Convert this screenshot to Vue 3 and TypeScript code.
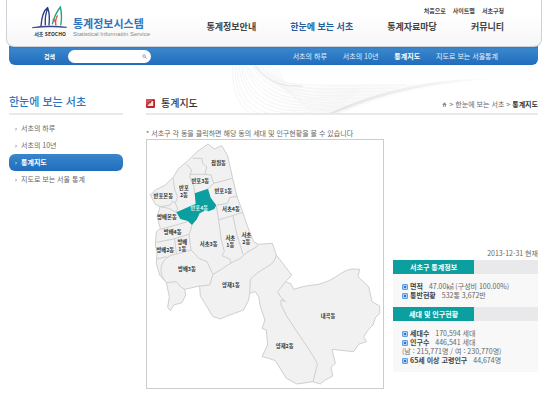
<script setup lang="ts">
import { ref } from 'vue'

interface Label { lines: string[]; x: number; y: number }

const keyword = ref('')
const utilities = ['처음으로', '사이트맵', '서초구청']
const sections = ['통계정보안내', '한눈에 보는 서초', '통계자료마당', '커뮤니티']
const submenu = ['서초의 하루', '서초의 10년', '통계지도', '지도로 보는 서울통계']
const sidebar = ['서초의 하루', '서초의 10년', '통계지도', '지도로 보는 서울 통계']
const selected = '반포4동'

const labels: Label[] = [
  { lines: ['잠원동'], x: 235, y: 83 },
  { lines: ['반포3동'], x: 180, y: 139 },
  { lines: ['반포', '2동'], x: 131, y: 158 },
  { lines: ['반포1동'], x: 249, y: 168 },
  { lines: ['반포본동'], x: 69, y: 182 },
  { lines: ['반포4동'], x: 177, y: 219 },
  { lines: ['서초4동'], x: 272, y: 221 },
  { lines: ['방배본동'], x: 80, y: 246 },
  { lines: ['방배4동'], x: 97, y: 291 },
  { lines: ['방배2동'], x: 75, y: 345 },
  { lines: ['방배', '1동'], x: 126, y: 320 },
  { lines: ['서초3동'], x: 205, y: 327 },
  { lines: ['서초', '1동'], x: 270, y: 308 },
  { lines: ['서초', '2동'], x: 318, y: 301 },
  { lines: ['방배3동'], x: 140, y: 402 },
  { lines: ['양재1동'], x: 272, y: 449 },
  { lines: ['내곡동'], x: 563, y: 543 },
  { lines: ['양재2동'], x: 433, y: 632 },
]

const outline =
  'M203 27 222 42 244 32 262 62 268 90 277 130 290 185 305 225 320 270 340 320 354 328 396 325 408 360 454 420 ' +
  '436 440 452 447 460 463Q500 450 530 449 Q570 440 600 416 Q620 403 635 402L658 403 653 425 685 455 695 500 718 513 718 535 705 548 698 570 685 583 670 605 678 620 655 628 640 650 575 643 585 685 572 697 577 723 555 735 540 747 518 740 470 747 438 730 405 677 385 670 365 665 382 630 378 585 365 580 374 555 360 515 355 485 345 470 328 475 325 495 310 525 260 543 240 552 218 545 180 483 178 453 133 463 136 480 125 503 100 510 90 527 82 517 87 485 78 443 58 420 48 385 50 350 45 330 48 290 60 280 50 245 59 215 45 208 30 180 45 165 75 150 100 125 115 100 140 80 170 50Z'

const borders = [
  'M157 70H185L187 85 199 95 194 118 212 120 220 145 277 130',
  'M138 87 154 105 148 125 161 155 163 175M148 118 194 118',
  'M98 128 103 165 112 185 105 205 98 198 90 210 59 215M105 205 112 220 108 232',
  'M203 161 220 145M59 215 85 220 108 232M60 283 115 268 142 260',
  'M155 270 146 300 152 345M48 322 100 312 146 298M103 312 108 355M50 372 78 365',
  'M78 443Q62 425 62 410 Q60 376 90 362 L152 345 165 358 175 370 200 380 218 418 208 450 178 453M78 443 108 440 120 455 133 463',
  'M218 418 240 405 270 385 300 370 320 352 350 335 354 328',
  'M228 213 235 255 242 310 252 350 245 362 268 372 272 385',
  'M230 210 262 205 268 188 292 183M237 254 308 232M278 243 290 300 308 358',
  'M408 360Q402 385 384 393 Q345 415 330 434 L328 475',
  'M436 440 412 470 420 485 435 499 422 495 422 510 440 545 490 620Q525 670 531 688L518 740',
]

const waves = Array.from({ length: 13 }, (_, i) =>
  `M${8 + i * 2} ${i % 3}C${4 + i * 5} ${65 - i * 3} ${55 + i * 5} ${62 - i * 3} ${112 + i * 2} ${47 - i * 2}`)
const arcs = Array.from({ length: 9 }, (_, i) =>
  `M${28 + i * 3} 1C${48 + i * 3} ${24 + i * 4} ${78 + i * 4} ${20 + i * 4} ${180 - i * 7} ${20 + i * 3}`)
</script>

<template>
  <div class="page" lang="ko">
    <header>
      <div class="masthead">
        <a class="brand" href="#">
          <svg class="logo" viewBox="0 0 108 72" role="img" aria-label="서초 SEOCHO">
            <path d="M1 65Q45 56 104 64Q54 60 1 65Z" fill="#26327d" stroke="#26327d" stroke-width="2" />
            <path d="M27 60C29 35 34 14 47 5C52 17 53 37 51 58M48 7C38 24 39 42 40 58" fill="none" stroke="#273a86" stroke-width="4" />
            <path d="M61 55C65 37 75 16 85 3C89 20 89 42 86 58" fill="none" stroke="#20a37c" stroke-width="4" />
            <path d="M62 40C69 42 72 49 71 58M77 28C71 37 69 45 72 58" fill="none" stroke="#e0543c" stroke-width="4" />
          </svg>
          <span class="logo-name">서초 SEOCHO</span>
          <span class="site-name">통계정보시스템</span>
          <span class="site-sub">Statistical Informatiin Service</span>
        </a>
        <div class="menus">
          <nav class="utility"><a v-for="u in utilities" :key="u" href="#">{{ u }}</a></nav>
          <nav class="sections">
            <a v-for="(s, i) in sections" :key="s" href="#" :class="{ on: i === 1 }">{{ s }}</a>
          </nav>
        </div>
      </div>
      <div class="bar">
        <form class="search" @submit.prevent>
          <label for="keyword">검색</label>
          <div class="field">
            <input id="keyword" v-model="keyword" type="text" />
            <button type="submit" aria-label="검색">
              <svg viewBox="0 0 12 12"><circle cx="5" cy="5" r="3.4" fill="#e8effa" stroke="#8b8fb9" stroke-width="1.6" /><path d="M7.5 7.5 11 11" stroke="#7d779c" stroke-width="2" /></svg>
            </button>
          </div>
        </form>
        <nav class="submenu"><a v-for="(s, i) in submenu" :key="s" href="#" :class="{ on: i === 2 }">{{ s }}</a></nav>
      </div>
    </header>

    <div class="body">
      <svg class="swirl" viewBox="0 0 290 48" aria-hidden="true">
        <defs>
          <linearGradient id="sweep" x1="0" x2="1" y1="0" y2="0">
            <stop offset="0" stop-color="#e4e4e4" /><stop offset="0.6" stop-color="#f3f3f3" /><stop offset="1" stop-color="#fff" />
          </linearGradient>
          <linearGradient id="haze" x1="0" x2="1" y1="0" y2="0">
            <stop offset="0" stop-color="#fff" /><stop offset="0.4" stop-color="#fafafa" /><stop offset="1" stop-color="#fff" />
          </linearGradient>
        </defs>
        <path d="M30 0C50 28 80 20 150 20C200 20 240 13 280 14Q190 18 115 48H60Q20 30 30 0Z" fill="url(#haze)" />
        <path v-for="w in waves" :key="w" :d="w" class="wave" />
        <path v-for="a in arcs" :key="a" :d="a" class="wave" />
        <path d="M30 0C45 20 58 21 78 21" fill="none" stroke="#e4e4e4" />
        <path d="M104 48Q190 10 280 14Q190 15 110 48Z" fill="url(#sweep)" />
      </svg>

      <aside>
        <h2>한눈에 보는 서초</h2>
        <ul>
          <li v-for="(s, i) in sidebar" :key="s">
            <a href="#" :class="{ on: i === 2 }"><svg viewBox="0 0 6 9"><path d="M1 1 5 5 1 8" fill="none" stroke="currentColor" stroke-width="2" /></svg>{{ s }}</a>
          </li>
        </ul>
      </aside>

      <main>
        <div class="heading">
          <h1>
            <svg viewBox="0 0 30 30"><rect width="30" height="30" rx="4" fill="#bd2630" /><path d="M0 0H26L0 18Z" fill="#d65055" /><path d="M6 23V18L11 18V14L17 14V9L24 6V23Z" fill="#fbe9e4" /></svg>
            통계지도
          </h1>
          <nav class="crumbs">
            <svg viewBox="0 0 18 18"><path d="M9 1 17 10H14V17H4V10H1Z" fill="#888" /><path d="M8 11H11V17H8Z" fill="#fff" /></svg>
            <span>&gt;</span><a href="#">한눈에 보는 서초</a><span>&gt;</span><b>통계지도</b>
          </nav>
        </div>

        <p class="note">* 서초구 각 동을 클릭하면 해당 동의 세대 및 인구현황을 볼 수 있습니다</p>
        <div class="content">
          <svg class="map" viewBox="20 15 708 744" role="img" aria-label="서초구 지도">
            <path :d="outline" class="land" />
            <path v-for="b in borders" :key="b" :d="b" class="border" />
            <path d="M163 175 203 161 211 188 228 211 222 222 205 229 193 227 178 235 170 252 155 270 142 258 120 252 108 232 166 206Z" fill="#0b9f9f" />
            <text v-for="l in labels" :key="l.lines.join('')" :class="{ active: l.lines[0] === selected }">
              <tspan v-for="(t, i) in l.lines" :key="t" :x="l.x" :y="l.y + 6 + i * 21">{{ t }}</tspan>
            </text>
          </svg>

          <div class="stats">
            <p class="date">2013-12-31 현재</p>
            <section>
              <h3><span>서초구 통계정보</span></h3>
              <ul>
                <li><i></i><b>면적</b>47.00㎢ (구성비 100.00%)</li>
                <li><i></i><b>통반현황</b>532통 3,672반</li>
              </ul>
            </section>
            <section>
              <h3><span>세대 및 인구현황</span></h3>
              <ul>
                <li><i></i><b>세대수</b>170,594 세대</li>
                <li><i></i><b>인구수</b>446,541 세대</li>
                <li>(남 : 215,771명 / 여 : 230,770명)</li>
                <li><i></i><b>65세 이상 고령인구</b>44,674명</li>
              </ul>
            </section>
          </div>
        </div>
      </main>
    </div>
  </div>
</template>

<style>
body { margin: 0; background: #fff; }
</style>

<style scoped>
* { box-sizing: border-box; }
.page { font-family: "Noto Sans CJK KR", "Liberation Sans", sans-serif; font-size: 7px; line-height: 9px; color: #666; }
a { color: inherit; text-decoration: none; white-space: nowrap; }
ul, p, h1, h2, h3 { margin: 0; padding: 0; list-style: none; }
svg { display: block; flex: none; }

header { padding: 0 8px 0 6px; }
.masthead { position: relative; z-index: 1; display: flex; justify-content: space-between; height: 47px; padding: 6px 37px 0 25px; border: 1px solid #ccd2d8; border-top: 0; border-radius: 0 0 8px 8px; background: linear-gradient(#fff 30%, #f6f6f7); }
.brand { display: grid; grid-template-columns: 36px auto; grid-template-rows: 24px 8px; column-gap: 5px; align-content: start; }
.logo { width: 36px; height: 24px; }
.logo-name { grid-row: 2; font-size: 5px; line-height: 8px; font-weight: 700; color: #333; text-align: center; }
.site-name { grid-column: 2; grid-row: 1; align-self: end; font-size: 11px; line-height: 14px; font-weight: 700; color: #2e75bd; }
.site-sub { grid-column: 2; grid-row: 2; font-family: "Liberation Sans Narrow", "Liberation Sans", sans-serif; font-size: 6px; line-height: 8px; color: #888; }
.menus { display: flex; flex-direction: column; align-items: flex-end; gap: 5px; }
.utility { display: flex; gap: 7px; font-size: 6px; font-weight: 700; color: #444; }
.sections { display: flex; gap: 34px; font-size: 9px; line-height: 13px; font-weight: 700; color: #444; }
.sections .on { color: #235f9f; }
.bar { display: flex; align-items: center; justify-content: space-between; height: 19px; margin: -1px 4px 0 3px; padding: 1px 40px 0 35px; border-radius: 0 0 6px 6px; background: linear-gradient(#2f6fb0, #3a86cb 15%, #1f6ebd); color: #e6f1fb; }
.search { display: flex; align-items: center; gap: 13px; font-size: 6px; font-weight: 700; color: #fff; }
.field { display: flex; align-items: center; width: 83px; height: 13px; padding: 0 4px 0 6px; border-radius: 7px; background: #fff; }
.field input { flex: 1; min-width: 0; padding: 0; border: 0; outline: 0; background: none; font: inherit; color: #333; }
.field button { padding: 0; border: 0; background: none; }
.field svg { width: 5px; height: 5px; }
.submenu { display: flex; gap: 16px; }
.submenu .on { font-weight: 700; color: #fff; }

.body { position: relative; display: grid; grid-template-columns: 114px 1fr; gap: 23px; padding: 28px 12px 16px 9px; }
.swirl { position: absolute; left: 225px; top: 0; width: 290px; height: 48px; z-index: -1; }
.wave { fill: none; stroke: #f5f5f5; stroke-width: 1; }
h2 { height: 22px; border-bottom: 2px solid #e9e9e9; font-size: 11px; line-height: 17px; font-weight: 500; color: #2e75bd; white-space: nowrap; }
aside ul { padding-top: 5px; }
aside a { display: flex; align-items: center; gap: 4px; height: 17px; padding-left: 6px; border-radius: 6px; }
aside svg { width: 2px; height: 4px; }
aside .on { background: linear-gradient(#3a86cb, #1f6ebd); font-weight: 700; color: #fff; }

main { min-width: 0; }
.heading { display: flex; justify-content: space-between; height: 22px; border-bottom: 2px solid #e9e9e9; }
h1 { display: flex; align-items: center; gap: 6px; font-size: 10px; line-height: 20px; font-weight: 500; color: #333; }
h1 svg { width: 9px; height: 9px; }
.crumbs { display: flex; align-items: center; gap: 2px; padding-top: 3px; }
.crumbs svg { width: 5px; height: 5px; }
.crumbs b { color: #333; }
.note { padding: 14px 0 1px; }
.content { display: grid; grid-template-columns: 238fr 145fr; gap: 9px; align-items: end; }
.map { width: 100%; height: auto; border: 1px solid #ccc; background: #fff; }
.land { fill: #f1f1f1; stroke: #cfcfcf; stroke-width: 3; stroke-linejoin: round; }
.border { fill: none; stroke: #cfcfcf; stroke-width: 3; stroke-linejoin: round; }
.map text { font-size: 16px; font-weight: 700; fill: #333; text-anchor: middle; }
.map .active { fill: #d8f3f2; }
.stats { padding-bottom: 17px; }
.date { padding-bottom: 2px; text-align: right; }
section { background: #f8f8f8; }
h3 { display: flex; height: 14px; background: #e9e9eb; font-size: 7px; line-height: 14px; color: #fff; }
h3 span { width: 56%; background: #0b9f9f; text-align: center; }
section ul { padding: 8px 0 7px 9px; }
section li { display: flex; align-items: center; height: 9px; white-space: nowrap; }
section b { margin-right: 6px; color: #444; }
i { width: 6px; height: 6px; margin-right: 2px; border: 1px solid #5f9fe6; border-radius: 1px; background: #a9cdf5; }
i::after { content: ""; display: block; width: 2px; height: 2px; margin: 1px; background: #2f75cc; }
</style>
